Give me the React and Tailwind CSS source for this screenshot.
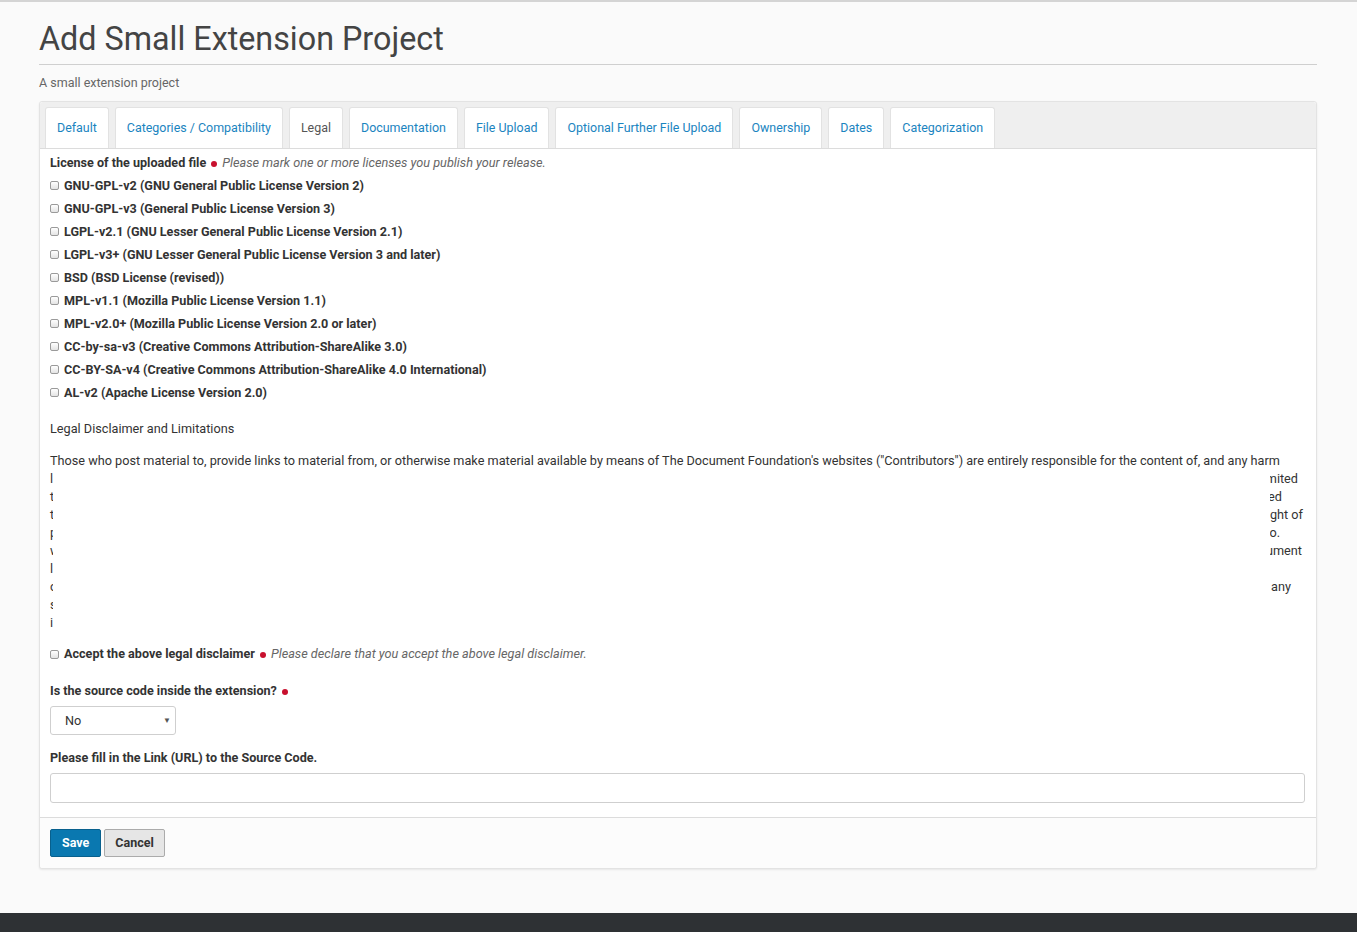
import React from 'react';

const tabs = [
  'Default',
  'Categories / Compatibility',
  'Legal',
  'Documentation',
  'File Upload',
  'Optional Further File Upload',
  'Ownership',
  'Dates',
  'Categorization',
];

const licenses = [
  'GNU-GPL-v2 (GNU General Public License Version 2)',
  'GNU-GPL-v3 (General Public License Version 3)',
  'LGPL-v2.1 (GNU Lesser General Public License Version 2.1)',
  'LGPL-v3+ (GNU Lesser General Public License Version 3 and later)',
  'BSD (BSD License (revised))',
  'MPL-v1.1 (Mozilla Public License Version 1.1)',
  'MPL-v2.0+ (Mozilla Public License Version 2.0 or later)',
  'CC-by-sa-v3 (Creative Commons Attribution-ShareAlike 3.0)',
  'CC-BY-SA-v4 (Creative Commons Attribution-ShareAlike 4.0 International)',
  'AL-v2 (Apache License Version 2.0)',
];

// lines of the disclaimer that sit under the white box
const hiddenLines = [
  { left: 'liability', right: 'unlimited', mr: 'mr-[7px]' },
  { left: 'the', right: 'limited', mr: 'mr-[23px]' },
  { left: 'the', right: 'copyright of', mr: 'mr-[2px]' },
  { left: 'permission', right: 'into.', mr: 'mr-[25px]' },
  { left: 'website', right: 'Document', mr: 'mr-[3px]' },
  { left: 'links', right: '', mr: '' },
  { left: 'or', right: 'any', mr: 'mr-[14px]' },
  { left: 'such', right: '', mr: '' },
  { left: 'in', right: '', mr: '' },
];

const Dot = () => (
  <span className="inline-block w-[6px] h-[6px] rounded-full bg-[#c8102e] mx-[5px] translate-y-[1px]" />
);

const Box = () => (
  <span className="inline-block w-[9px] h-[9px] rounded-[2px] border border-[#9a9a9a] bg-gradient-to-b from-white to-[#e4e4e4] mr-[5px] shrink-0" />
);

const App = () => {
  return (
    <div className="min-h-screen bg-[#fafafa] flex flex-col font-['Roboto',sans-serif] text-[#333]">
      <div className="h-[2px] bg-[#d4d4d4]" />

      <div className="px-[39px] flex-1 pr-[40px]">
        <h1 className="text-[32.3px] leading-[40px] text-[#444] font-normal mt-[17px]">
          Add Small Extension Project
        </h1>
        <div className="h-px bg-[#cfcfcf] mt-[5px]" />
        <p className="text-[12.5px] leading-[18px] text-[#666] mt-[9px]">A small extension project</p>

        <div className="mt-[9px] border border-[#e3e3e3] rounded-[3px] bg-white shadow-[0_1px_2px_rgba(0,0,0,0.08)]">
          {/* tabs */}
          <div className="bg-[#efefef] border-b border-[#dcdcdc] pt-[5px] pl-[5px] flex gap-[6px] rounded-t-[3px]">
            {tabs.map((t) => (
              <div
                key={t}
                className={
                  'h-[41px] flex items-center bg-white border border-b-0 border-[#e2e2e2] rounded-t-[3px] text-[12.45px] ' +
                  (t === 'Legal' ? 'px-[11px] text-[#555]' : 'px-[11px] text-[#1a84c0]')
                }
              >
                {t}
              </div>
            ))}
          </div>

          {/* body */}
          <div className="pl-[10px] pr-[11px] pt-[2px] pb-[14px] text-[12.7px] leading-[18px]">
            <div className="h-[23px] flex items-center">
              <span className="font-bold text-[12.6px]">License of the uploaded file</span>
              <Dot />
              <span className="italic text-[#666]">Please mark one or more licenses you publish your release.</span>
            </div>
            {licenses.map((l) => (
              <div key={l} className="h-[23px] flex items-center">
                <Box />
                <span className="font-bold text-[12.6px]">{l}</span>
              </div>
            ))}

            <div className="mt-[16px]">Legal Disclaimer and Limitations</div>

            <div className="mt-[14px] relative">
              <div className="whitespace-nowrap">
                Those who post material to, provide links to material from, or otherwise make material available by means of The Document Foundation's websites ("Contributors") are entirely responsible for the content of, and any harm
              </div>
              {hiddenLines.map((ln, i) => (
                <div key={i} className="flex whitespace-nowrap">
                  <span>{ln.left}</span>
                  <span className="flex-1" />
                  <span className={ln.mr}>{ln.right}</span>
                </div>
              ))}
              <div className="absolute top-[18px] bottom-0 left-[3px] right-[35px] bg-white" />
            </div>

            <div className="mt-[13px] flex items-center">
              <Box />
              <span className="font-bold text-[12.6px]">Accept the above legal disclaimer</span>
              <Dot />
              <span className="italic text-[#666]">Please declare that you accept the above legal disclaimer.</span>
            </div>

            <div className="mt-[19px] flex items-center">
              <span className="font-bold text-[12.6px]">Is the source code inside the extension?</span>
              <Dot />
            </div>

            <div className="mt-[6px] w-[126px] h-[29px] border border-[#cfcfcf] rounded-[3px] flex items-center justify-between pl-[14px] pr-[4px] bg-white">
              <span>No</span>
              <span className="text-[8px] text-[#555]">▼</span>
            </div>

            <div className="mt-[14px] font-bold text-[12.6px]">Please fill in the Link (URL) to the Source Code.</div>

            <div className="mt-[6px] h-[30px] border border-[#cfcfcf] rounded-[3px] bg-white" />
          </div>

          {/* footer */}
          <div className="border-t border-[#dcdcdc] bg-[#fcfcfc] px-[10px] pt-[11px] pb-[11px] flex gap-[3px] rounded-b-[3px]">
            <button className="h-[28px] px-[11px] bg-[#0a78b0] border border-[#08608d] rounded-[2px] text-white font-bold text-[12.5px]">
              Save
            </button>
            <button className="h-[28px] px-[10px] bg-[#e6e6e6] border border-[#ababab] rounded-[2px] text-[#333] font-bold text-[12.5px]">
              Cancel
            </button>
          </div>
        </div>
      </div>

      <div className="h-[19px] bg-[#2e3134] mt-[44px]" />
    </div>
  );
};

export default App;
